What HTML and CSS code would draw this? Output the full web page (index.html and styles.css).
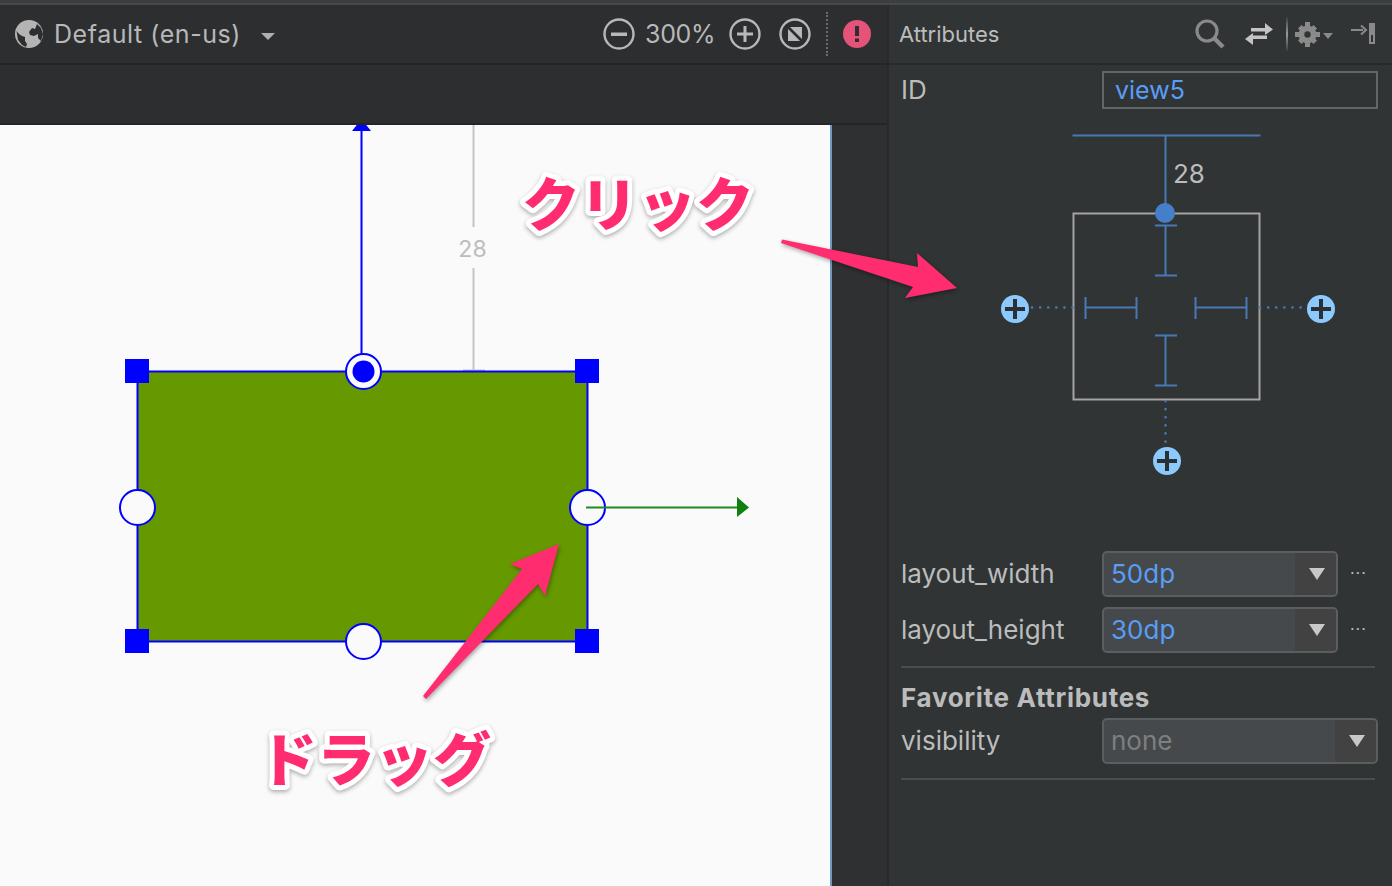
FILE: index.html
```html
<!DOCTYPE html>
<html lang="en">
<head>
    <meta charset="UTF-8">
    <title>Attributes</title>
    <link rel="stylesheet" href="styles.css">
</head>
<body>
    <div class="app">
        <div class="top-strip"></div>
        <div class="main">
            <div class="editor">
                <div class="toolbar">
                    <svg class="globe" width="28" height="28" viewBox="0 0 28 28">
                        <circle cx="14" cy="14" r="14" fill="#b4b4b4"/>
                        <path d="M1.500 11L4 14L7 16L10 17L10 21L12 24L11 27L7 25L3 20Z" fill="#2d2e30"/>
                        <path d="M14 12L17 8L20 9L22 4L26 8L28 14L26 21L23 18L23 14L19 16L15 15Z" fill="#2d2e30"/>
                    </svg>
                    <span class="locale">Default (en-us)</span>
                    <span class="caret"></span>
                    <div class="zoom-group">
                        <svg width="32" height="32" viewBox="0 0 32 32">
                            <circle cx="16" cy="16" r="14.5" fill="none" stroke="#b8b8b8" stroke-width="2.4"/>
                            <path d="M8 14.5H24V18H8Z" fill="#b8b8b8"/>
                        </svg>
                        <span class="zoom-value">300%</span>
                        <svg width="32" height="32" viewBox="0 0 32 32">
                            <circle cx="16" cy="16" r="14.5" fill="none" stroke="#b8b8b8" stroke-width="2.4"/>
                            <path d="M8 14.5H14.5V8H17.5V14.5H24V17.5H17.5V24H14.5V17.5H8Z" fill="#b8b8b8"/>
                        </svg>
                        <svg class="fit" width="32" height="32" viewBox="0 0 32 32">
                            <circle cx="16" cy="16" r="14.5" fill="none" stroke="#b8b8b8" stroke-width="2.4"/>
                            <rect x="9" y="9" width="14" height="14" fill="#b8b8b8"/>
                            <path d="M8 8L24 24" stroke="#2d2e30" stroke-width="2.6" fill="none"/>
                        </svg>
                        <span class="dotted-sep"></span>
                        <svg class="error" width="28" height="28" viewBox="0 0 28 28">
                            <circle cx="14" cy="14" r="14" fill="#e5527a"/>
                            <path d="M12 6H16V16H12ZM12 18.5H16V22H12Z" fill="#2d2e30"/>
                        </svg>
                    </div>
                </div>
                <div class="subbar"></div>
                <div class="canvas-row">
                    <div class="stage">
                        <svg class="stage-svg" width="830" height="761" viewBox="0 125 830 761">
                            <path d="M361.5 125V371" stroke="#0000ff" stroke-width="2" fill="none"/>
                            <path d="M352 131L361.5 119L371 131Z" fill="#0000ff"/>
                            <path d="M473.5 125V227M473.5 268V371M463 370.5H485" stroke="#c4c4c4" stroke-width="2" fill="none"/>
                            <text class="gap-label" x="472.5" y="257" text-anchor="middle">28</text>
                            <rect x="137.5" y="371.5" width="450" height="270" fill="#669900" stroke="#0000ff" stroke-width="2"/>
                            <rect x="125" y="359" width="24" height="24" fill="#0000ff"/>
                            <rect x="575" y="359" width="24" height="24" fill="#0000ff"/>
                            <rect x="125" y="629" width="24" height="24" fill="#0000ff"/>
                            <rect x="575" y="629" width="24" height="24" fill="#0000ff"/>
                            <circle cx="363.5" cy="371.5" r="17.5" fill="#fafafa" stroke="#0000ff" stroke-width="2"/>
                            <circle cx="363.5" cy="371.5" r="11" fill="#0000ff"/>
                            <circle cx="137.5" cy="507.5" r="17.5" fill="#fafafa" stroke="#0000ff" stroke-width="2"/>
                            <circle cx="587.5" cy="507.5" r="17.5" fill="#fafafa" stroke="#0000ff" stroke-width="2"/>
                            <circle cx="363.5" cy="641.5" r="17.5" fill="#fafafa" stroke="#0000ff" stroke-width="2"/>
                            <path d="M586 507.5H738" stroke="#1f8a1f" stroke-width="2" fill="none"/>
                            <path d="M737 497L749 507.5L737 517Z" fill="#0f7f0f"/>
                        </svg>
                    </div>
                    <div class="gutter"></div>
                </div>
            </div>
            <div class="panel">
                <div class="panel-head">
                    <span class="panel-title">Attributes</span>
                    <div class="panel-icons">
                        <svg width="30" height="30" viewBox="0 0 30 30">
                            <circle cx="12" cy="12" r="10" fill="none" stroke="#8a8a8a" stroke-width="3.2"/>
                            <path d="M19 19L28 28" stroke="#8a8a8a" stroke-width="4.4" fill="none"/>
                        </svg>
                        <svg class="swap" width="28" height="24" viewBox="0 0 28 24">
                            <path d="M6 6H20V1L28 7.500L20 13V9.500H6Z" fill="#c4c4c4"/>
                            <path d="M22 13.500V17H8V23L0 17L8 11V13.500Z" fill="#c4c4c4"/>
                        </svg>
                        <span class="icon-divider"></span>
                        <svg class="gear" width="25" height="25" viewBox="0 0 25 25">
                            <circle cx="12.500" cy="12.500" r="6.500" fill="none" stroke="#8a8a8a" stroke-width="5"/>
                            <path d="M10 0H15V25H10ZM0 10H25V15H0Z" fill="#8a8a8a"/>
                            <path d="M3 6.500L6.500 3L22 18.500L18.500 22ZM3 18.500L18.500 3L22 6.500L6.500 22Z" fill="#8a8a8a"/>
                            <circle cx="12.500" cy="12.500" r="3.200" fill="#303435"/>
                        </svg>
                        <span class="caret small"></span>
                        <svg class="collapse" width="25" height="24" viewBox="0 0 25 24">
                            <path d="M0 8H12" stroke="#8a8a8a" stroke-width="2" fill="none"/>
                            <path d="M10 3.500L15 8L10 12.500" stroke="#8a8a8a" stroke-width="2" fill="none"/>
                            <path d="M18 1H24V22H18Z" fill="#8a8a8a"/>
                            <path d="M20 13H22V20H20Z" fill="#303435"/>
                        </svg>
                    </div>
                </div>
                <div class="id-row">
                    <span class="attr-label">ID</span>
                    <span class="id-input">view5</span>
                </div>
                <svg class="constraint" width="503" height="360" viewBox="889 125 503 360">
                    <g class="blue-lines">
                        <path d="M1072.500 135.500H1260.500M1165.500 135.500V205"/>
                        <path d="M1155 225.500H1177M1165.500 225.500V275.500M1155 275.500H1177"/>
                        <path d="M1155 335.500H1177M1165.500 335.500V385.500M1155 385.500H1177"/>
                        <path d="M1085.500 297V319M1085.500 307.500H1136.500M1136.500 297V319"/>
                        <path d="M1195.500 297V319M1195.500 307.500H1246.500M1246.500 297V319"/>
                    </g>
                    <rect x="1073.500" y="213.500" width="186" height="186" fill="none" stroke="#a4a4a4" stroke-width="2"/>
                    <circle cx="1165" cy="213" r="10" fill="#467fc9"/>
                    <text class="margin-value" x="1173" y="183">28</text>
                    <path class="dots" d="M1032 307.500H1074M1260 307.500H1302M1165.500 401V442"/>
                    <g class="add-btn">
                        <circle cx="1015" cy="309" r="14"/>
                        <circle cx="1321" cy="309" r="14"/>
                        <circle cx="1167" cy="461" r="14"/>
                    </g>
                    <path class="add-plus" d="M1005 309H1025M1015 299V319M1311 309H1331M1321 299V319M1157 461H1177M1167 451V471"/>
                </svg>
                <div class="attrs">
                    <div class="attr-row">
                        <span class="attr-label">layout_width</span>
                        <div class="combo"><span class="combo-value">50dp</span><span class="combo-arrow"></span></div>
                        <span class="more">...</span>
                    </div>
                    <div class="attr-row">
                        <span class="attr-label">layout_height</span>
                        <div class="combo"><span class="combo-value">30dp</span><span class="combo-arrow"></span></div>
                        <span class="more">...</span>
                    </div>
                    <div class="group">
                        <div class="group-title">Favorite Attributes</div>
                        <div class="attr-row">
                            <span class="attr-label">visibility</span>
                            <div class="combo wide"><span class="combo-value muted">none</span><span class="combo-arrow"></span></div>
                        </div>
                    </div>
                </div>
            </div>
        </div>
        <svg class="overlay" width="1392" height="886" viewBox="0 0 1392 886">
            <path class="pink-arrow" d="M782 239.500L918 267L917 253L957 288L905 298L913 287L781 243Z"/>
            <path class="pink-arrow" d="M423 696L522 569L510 564L559 544L545 596L538 584L426 699Z"/>
            <text class="note" x="522" y="226">クリック</text>
            <text class="note" x="259" y="781">ドラッグ</text>
        </svg>
    </div>
</body>
</html>
```

FILE: styles.css
```css
html, body {
    margin: 0;
    padding: 0;
}
body {
    font-family: 'Inter', sans-serif;
    background-color: #303435;
    overflow: hidden;
}
.app {
    position: relative;
    width: 1392px;
    height: 886px;
    display: flex;
    flex-direction: column;
    overflow: hidden;
}
.top-strip {
    background-color: #3c3f41;
    border-bottom: 2px solid #46494b;
    box-sizing: border-box;
    flex: none;
    height: 5px;
}
.main {
    flex: 1;
    display: flex;
    min-height: 0;
}
.editor {
    width: 887px;
    flex: none;
    display: flex;
    flex-direction: column;
    background-color: #2d2e30;
    border-right: 2px solid #28292b;
}
.toolbar {
    height: 58px;
    flex: none;
    display: flex;
    align-items: center;
    padding-left: 15px;
    border-bottom: 2px solid #242527;
    color: #b8b8b8;
}
.locale {
    margin-left: 11px;
    font-size: 25px;
    letter-spacing: 0.55px;
}
.caret {
    width: 0;
    height: 0;
    margin-left: 20px;
    border-left: 7px solid transparent;
    border-right: 7px solid transparent;
    border-top: 7px solid #b0b0b0;
    margin-top: 4px;
}
.caret.small {
    margin-left: 3px;
    border-left-width: 5px;
    border-right-width: 5px;
    border-top: 6px solid #8a8a8a;
    margin-top: 3px;
}
.zoom-group {
    margin-left: auto;
    margin-right: 16px;
    display: flex;
    align-items: center;
}
.zoom-value {
    font-size: 25px;
    letter-spacing: -0.3px;
    width: 68px;
    margin: 0 16px 0 10px;
    white-space: nowrap;
}
.fit {
    margin-left: 18px;
}
.dotted-sep {
    width: 0;
    height: 44px;
    margin: 0 15px 0 15px;
    border-left: 2px dotted #6c6c6c;
}
.subbar {
    height: 58px;
    flex: none;
    border-bottom: 2px solid #242527;
}
.canvas-row {
    flex: 1;
    display: flex;
    min-height: 0;
}
.stage {
    width: 830px;
    flex: none;
    background-color: #fafafa;
    border-right: 2px solid #6f97c2;
    position: relative;
}
.stage-svg {
    display: block;
}
.gap-label {
    font-size: 23px;
    fill: #bcbcbc;
}
.gutter {
    flex: 1;
    background-color: #2e3032;
}
.panel {
    flex: 1;
    min-width: 0;
    background-color: #303435;
    color: #bcbcbc;
    display: flex;
    flex-direction: column;
}
.panel-head {
    height: 58px;
    flex: none;
    display: flex;
    align-items: center;
    justify-content: space-between;
    padding: 0 16px 0 10px;
    border-bottom: 2px solid #28292b;
}
.panel-title {
    font-size: 22px;
}
.panel-icons {
    display: flex;
    align-items: center;
}
.swap {
    margin-left: 20px;
}
.icon-divider {
    width: 2px;
    height: 34px;
    margin: 0 7px 0 13px;
    background: linear-gradient(to bottom, #3a3d3f, #9a9a9a 50%, #3a3d3f);
}
.collapse {
    margin-left: 18px;
}
.id-row {
    display: flex;
    align-items: center;
    height: 40px;
    margin-top: 5px;
    padding-left: 12px;
    flex: none;
}
.attr-label {
    font-size: 26px;
    width: 201px;
    flex: none;
    margin-top: -2px;
}
.id-input {
    height: 34px;
    line-height: 34px;
    border: 2px solid #636669;
    padding-left: 11px;
    width: 261px;
    font-size: 25px;
    color: #589df6;
}
.constraint {
    display: block;
    flex: none;
    margin-top: 15px;
}
.blue-lines path {
    fill: none;
    stroke: #4878b6;
    stroke-width: 2;
}
.margin-value {
    font-size: 26px;
    fill: #bcbcbc;
}
.dots {
    fill: none;
    stroke: #4878b6;
    stroke-width: 2.6;
    stroke-linecap: round;
    stroke-dasharray: 0.1 8;
}
.add-btn circle {
    fill: #8ccafd;
}
.add-plus {
    fill: none;
    stroke: #2b3034;
    stroke-width: 4;
}
.attrs {
    padding: 66px 16px 0 12px;
}
.attr-row {
    display: flex;
    align-items: center;
    height: 46px;
    margin-bottom: 10px;
}
.combo {
    width: 236px;
    height: 46px;
    flex: none;
    box-sizing: border-box;
    display: flex;
    justify-content: space-between;
    background-color: #46494b;
    border: 2px solid #5b5e60;
    border-radius: 5px;
    overflow: hidden;
}
.combo.wide {
    width: 276px;
}
.combo-value {
    font-size: 26px;
    line-height: 42px;
    padding-left: 7px;
    color: #589df6;
}
.combo-value.muted {
    color: #7d7f81;
}
.combo-arrow {
    width: 41px;
    flex: none;
    background-color: #424243;
    position: relative;
}
.combo-arrow::after {
    content: "";
    position: absolute;
    left: 14px;
    top: 15px;
    border-left: 8px solid transparent;
    border-right: 8px solid transparent;
    border-top: 12px solid #c8c8c8;
}
.more {
    font-size: 16px;
    margin-left: 12px;
    margin-top: -12px;
    letter-spacing: 1px;
}
.group {
    border-top: 2px solid #4a4d4f;
    border-bottom: 2px solid #4a4d4f;
    margin-top: 13px;
    padding-bottom: 4px;
    width: 474px;
}
.group-title {
    font-size: 26px;
    font-weight: 700;
    letter-spacing: 0.7px;
    line-height: 30px;
    margin-top: 15px;
    margin-bottom: 5px;
}
.group .attr-row {
    margin-bottom: 10px;
}
.overlay {
    position: absolute;
    left: 0;
    top: 0;
    pointer-events: none;
}
.pink-arrow {
    fill: #ff2d6f;
    filter: drop-shadow(1px 2px 2px rgba(0, 0, 0, 0.35));
}
.note {
    font-family: 'Noto Sans CJK JP', sans-serif;
    font-weight: 900;
    font-size: 58px;
    fill: #ff2d6f;
    stroke: #ffffff;
    stroke-width: 10px;
    stroke-linejoin: round;
    paint-order: stroke fill;
    filter: drop-shadow(0 2px 2px rgba(0, 0, 0, 0.3));
}
```
